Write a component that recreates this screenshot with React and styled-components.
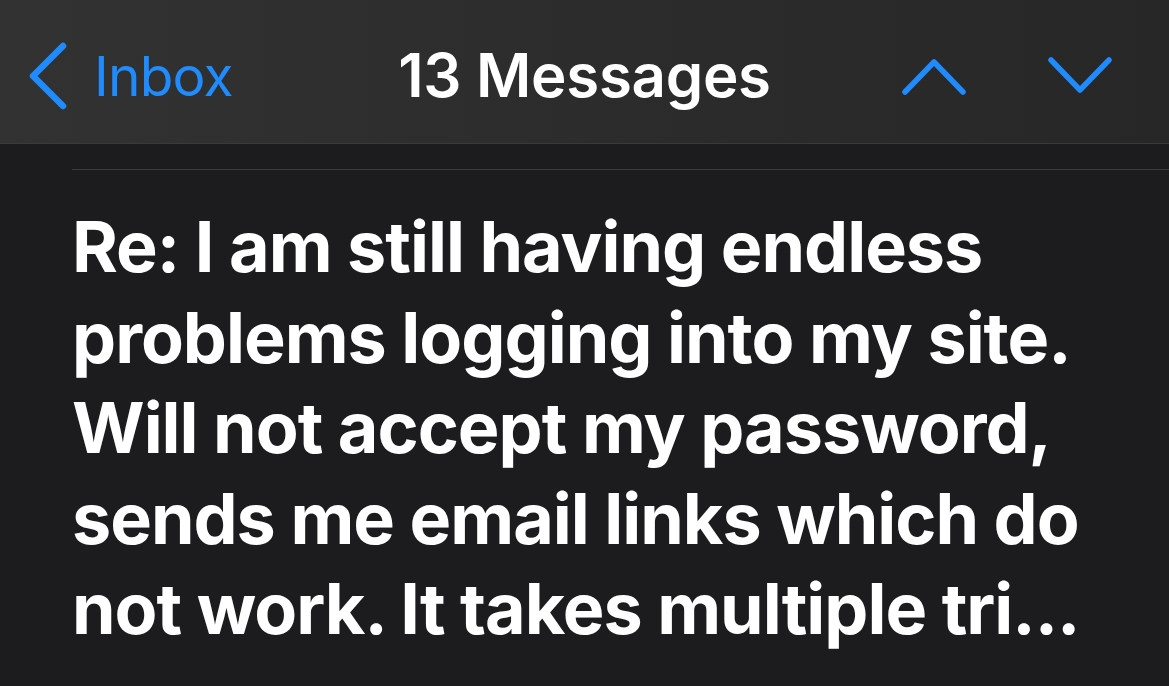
import React from "react";
import styled, { createGlobalStyle } from "styled-components";

const GlobalStyle = createGlobalStyle`
  html, body {
    margin: 0;
    padding: 0;
    background: #1c1c1e;
  }
  body {
    font-family: Inter, "Noto Sans", sans-serif;
    -webkit-font-smoothing: antialiased;
  }
`;

const Screen = styled.div`
  width: 1169px;
  height: 686px;
  overflow: hidden;
  background: #1c1c1e;
`;

const NavBar = styled.header`
  height: 144px;
  display: grid;
  grid-template-columns: 1fr auto 1fr;
  align-items: center;
  padding: 8px 28px 0;
  box-sizing: border-box;
  background: linear-gradient(90deg, #323232 0%, #2c2c2c 50%, #272727 100%);
  border-bottom: 1px solid #3a3a3c;
`;

const BackButton = styled.div`
  display: flex;
  align-items: center;
  gap: 26px;
  color: #1f8bfc;
  font-size: 55px;
  font-weight: 400;
  letter-spacing: -0.8px;
`;

const Title = styled.div`
  color: #ffffff;
  font-size: 60px;
  font-weight: 600;
  letter-spacing: -0.3px;
  margin-top: -2px;
`;

const Arrows = styled.div`
  display: flex;
  justify-content: flex-end;
  align-items: center;
  gap: 80px;
  padding-right: 28px;
`;

const Divider = styled.div`
  margin: 25px 0 0 72px;
  height: 1px;
  background: #3a3a3c;
`;

const Subject = styled.h1`
  margin: 0;
  padding: 32px 0 0 72px;
  color: #ffffff;
  font-size: 70px;
  font-weight: 700;
  line-height: 90.5px;
  letter-spacing: -1px;
  white-space: nowrap;
`;

const Line = styled.span`
  display: block;
`;

const Chevron = ({ dir }) => {
  const paths = {
    left: "M35 4 L5 34 L35 64",
    up: "M4 36 L33 6 L62 36",
    down: "M4 4 L33 34 L62 4",
  };
  const size = dir === "left" ? { w: 40, h: 68 } : { w: 66, h: 40 };
  return (
    <svg width={size.w} height={size.h} viewBox={`0 0 ${size.w} ${size.h}`} fill="none">
      <path
        d={paths[dir]}
        stroke="#1f8bfc"
        strokeWidth={dir === "left" ? 6.5 : 5.5}
        strokeLinecap="round"
        strokeLinejoin="round"
      />
    </svg>
  );
};

const lines = [
  "Re: I am still having endless",
  "problems logging into my site.",
  "Will not accept my password,",
  "sends me email links which do",
  "not work. It takes multiple tri...",
];

export default function App() {
  return (
    <>
      <GlobalStyle />
      <Screen>
        <NavBar>
          <BackButton>
            <Chevron dir="left" />
            Inbox
          </BackButton>
          <Title>13 Messages</Title>
          <Arrows>
            <Chevron dir="up" />
            <Chevron dir="down" />
          </Arrows>
        </NavBar>
        <Divider />
        <Subject>
          {lines.map((l) => (
            <Line key={l}>{l}</Line>
          ))}
        </Subject>
      </Screen>
    </>
  );
}
